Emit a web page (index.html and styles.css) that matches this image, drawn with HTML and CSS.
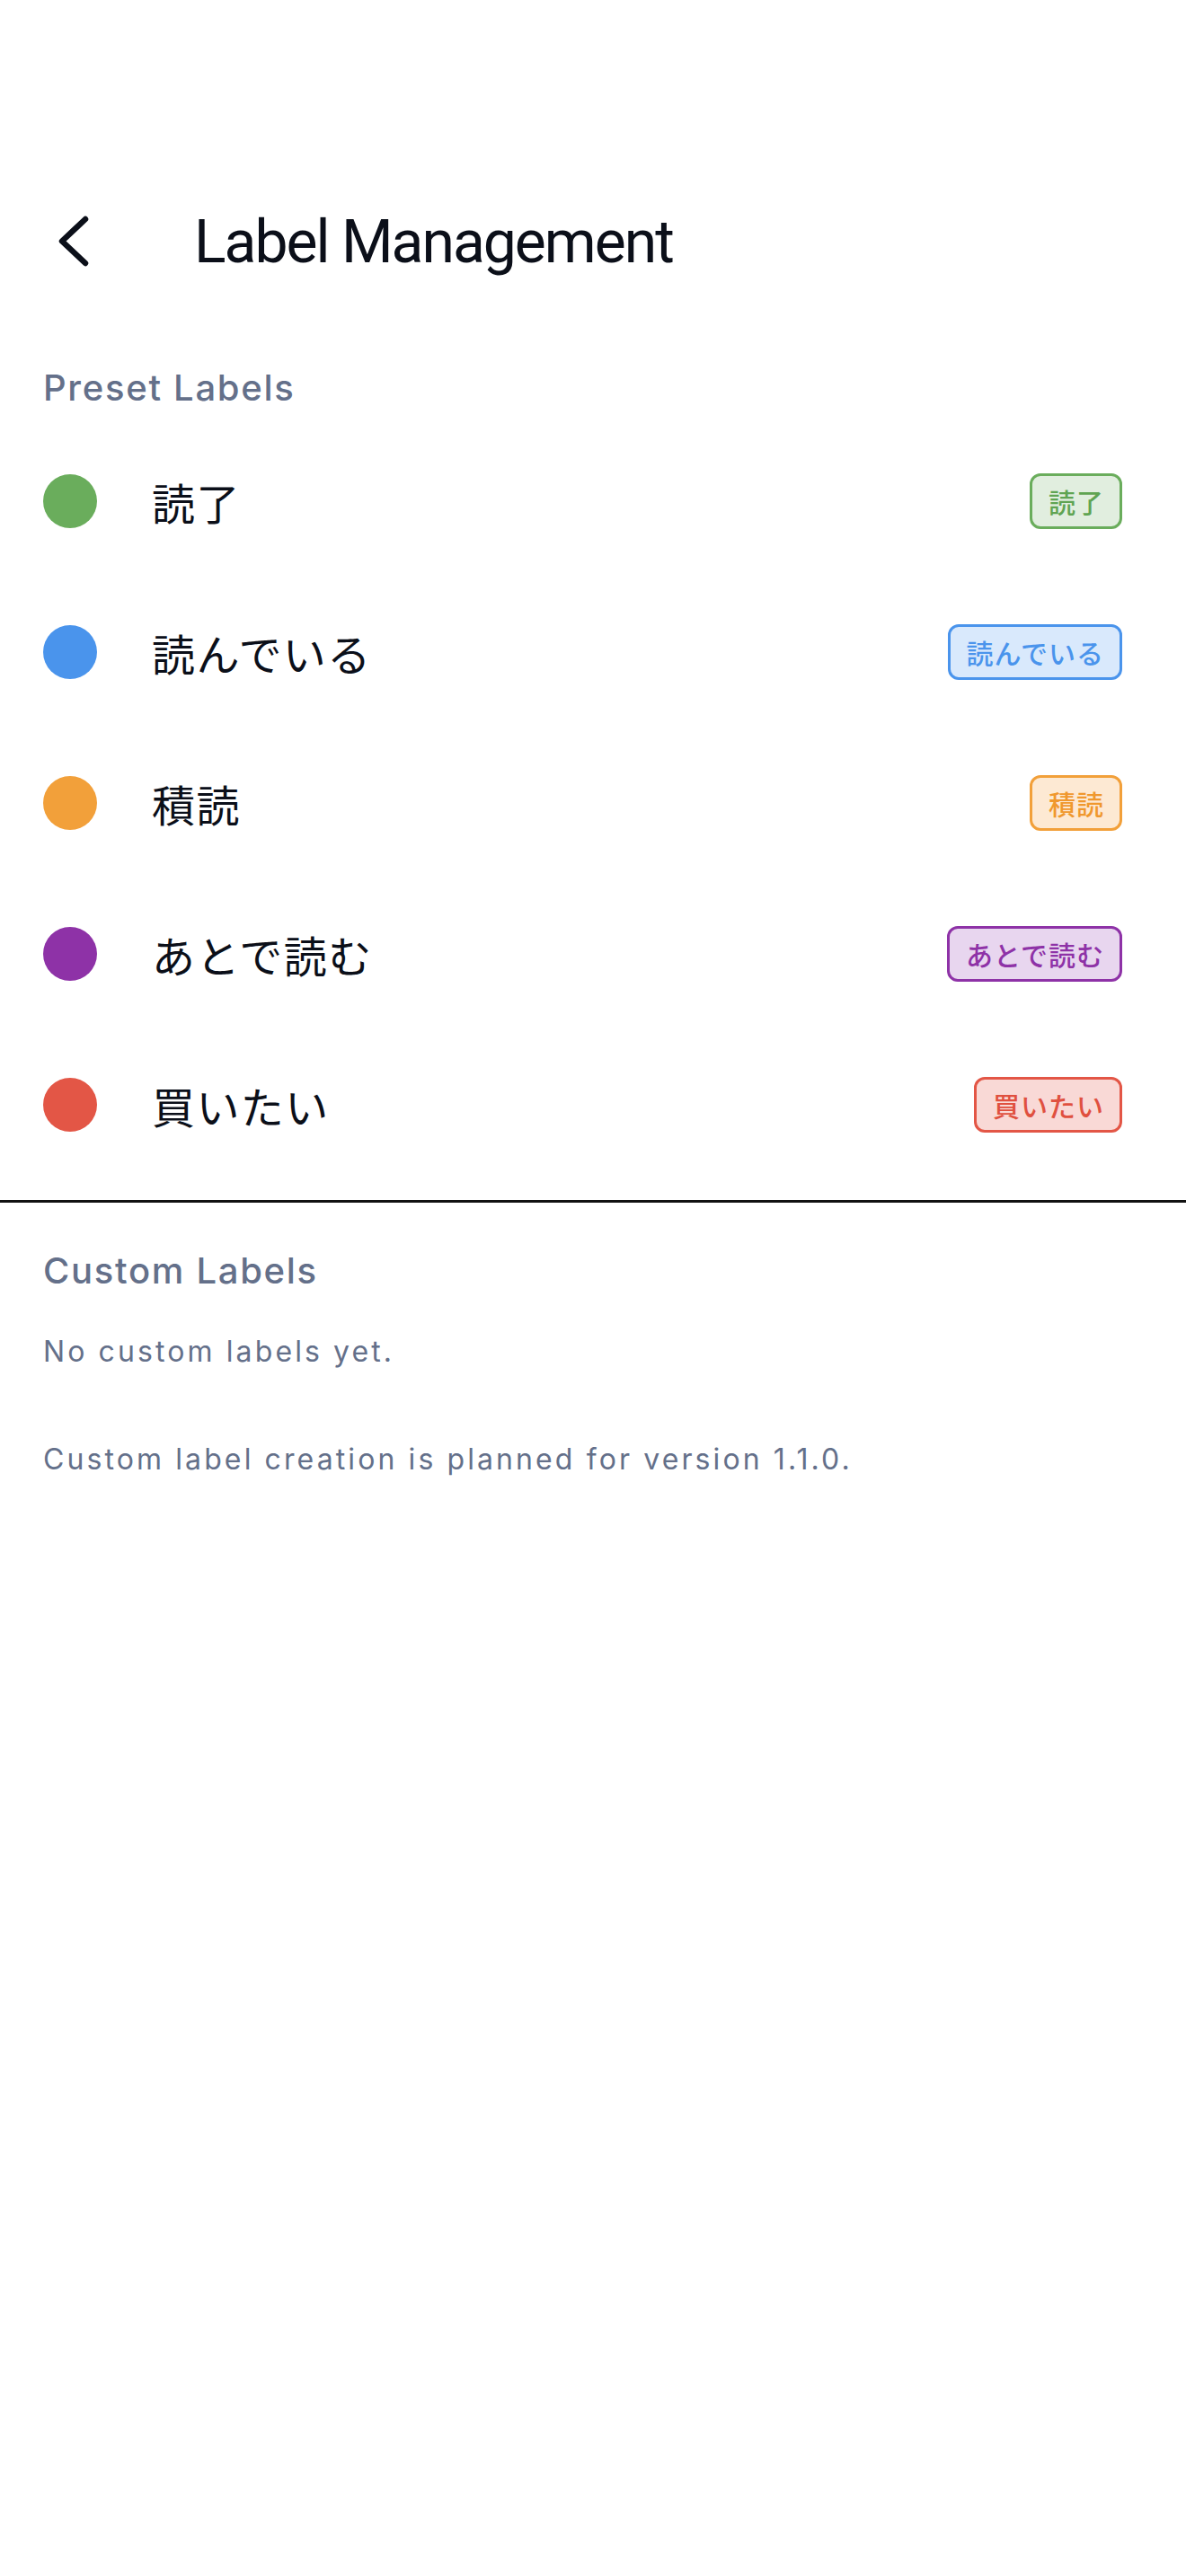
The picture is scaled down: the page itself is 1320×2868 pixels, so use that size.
FILE: index.html
```html
<!DOCTYPE html>
<html lang="ja">
<head>
<meta charset="utf-8">
<title>Label Management</title>
<link rel="stylesheet" href="styles.css">
</head>
<body>
<div class="screen">
  <header class="appbar">
    <button class="back" aria-label="Back">
      <svg width="40" height="60" viewBox="0 0 40 60"><path d="M30 4 L4 28.5 L30 53" fill="none" stroke="#0b0f19" stroke-width="6.5" stroke-linecap="round" stroke-linejoin="round"/></svg>
    </button>
    <h1 class="title">Label Management</h1>
  </header>

  <section class="section">
    <h2 class="section-title">Preset Labels</h2>
    <ul class="label-list">
      <li class="label-row">
        <span class="dot green"></span>
        <span class="label-name">読了</span>
        <span class="badge green">読了</span>
      </li>
      <li class="label-row">
        <span class="dot blue"></span>
        <span class="label-name">読んでいる</span>
        <span class="badge blue">読んでいる</span>
      </li>
      <li class="label-row">
        <span class="dot orange"></span>
        <span class="label-name">積読</span>
        <span class="badge orange">積読</span>
      </li>
      <li class="label-row">
        <span class="dot purple"></span>
        <span class="label-name">あとで読む</span>
        <span class="badge purple">あとで読む</span>
      </li>
      <li class="label-row">
        <span class="dot red"></span>
        <span class="label-name">買いたい</span>
        <span class="badge red">買いたい</span>
      </li>
    </ul>
  </section>

  <hr class="divider">

  <section class="section custom">
    <h2 class="section-title">Custom Labels</h2>
    <p class="note">No custom labels yet.</p>
    <p class="note planned">Custom label creation is planned for version 1.1.0.</p>
  </section>
</div>
</body>
</html>
```

FILE: styles.css
```css
* { box-sizing: border-box; }
html, body { margin: 0; padding: 0; background: #ffffff; }
body {
  font-family: Inter, "Noto Sans CJK JP", sans-serif;
  color: #0b0f19;
}
.screen {
  width: 1320px;
  min-height: 2868px;
  padding-top: 186px;
}
.appbar {
  height: 168px;
  display: flex;
  align-items: center;
  gap: 48px;
}
.back {
  width: 168px;
  height: 168px;
  display: flex;
  align-items: center;
  justify-content: center;
  background: none;
  border: 0;
  padding: 0;
  padding-left: 2px;
}
.back svg { display: block; }
.title {
  margin: 0;
  font-family: Roboto, Inter, sans-serif;
  font-size: 66px;
  font-weight: 400;
  line-height: 80px;
  letter-spacing: -2px;
  color: #0b0f19;
}
.section-title {
  margin: 0;
  padding: 50px 48px 14px;
  font-size: 40px;
  font-weight: 500;
  line-height: 56px;
  color: #64708a;
  letter-spacing: 1.7px;
}
.label-list {
  list-style: none;
  margin: 0;
  padding: 0;
}
.label-row {
  height: 168px;
  display: flex;
  align-items: center;
  padding: 0 71px 0 48px;
}
.dot {
  width: 60px;
  height: 60px;
  border-radius: 50%;
  flex: none;
}
.label-name {
  margin-left: 61px;
  font-family: "Noto Sans CJK JP", sans-serif;
  font-size: 48px;
  line-height: 60px;
  letter-spacing: 1.4px;
  color: #0b0f19;
  flex: 1;
}
.badge {
  font-family: "Noto Sans CJK JP", sans-serif;
  font-size: 30px;
  font-weight: 500;
  line-height: 36px;
  letter-spacing: 1px;
  padding: 10px 17px 10px 18px;
  border: 3px solid;
  border-radius: 12px;
}
.dot.green { background: #6aad5c; }
.dot.blue { background: #4a94ec; }
.dot.orange { background: #f2a03a; }
.dot.purple { background: #8e32a7; }
.dot.red { background: #e35646; }

.badge.green { color: #5fa452; border-color: #6aad5c; background: #e1eedf; }
.badge.blue { color: #4a94ec; border-color: #4a94ec; background: #d9e9fc; }
.badge.orange { color: #f0982e; border-color: #f2a03a; background: #fde9d3; }
.badge.purple { color: #8e32a7; border-color: #8e32a7; background: #e8d6ef; }
.badge.red { color: #e0503f; border-color: #e35646; background: #f9d9d6; }

.divider {
  margin: 22px 0 0;
  height: 3px;
  border: 0;
  background: #111111;
}
.custom .section-title {
  padding: 48px 48px 0;
}
.note {
  margin: 0;
  padding: 40px 48px 0;
  font-size: 32px;
  line-height: 44px;
  color: #64708a;
  letter-spacing: 3.1px;
}
.note.planned {
  padding-top: 76px;
}
```
